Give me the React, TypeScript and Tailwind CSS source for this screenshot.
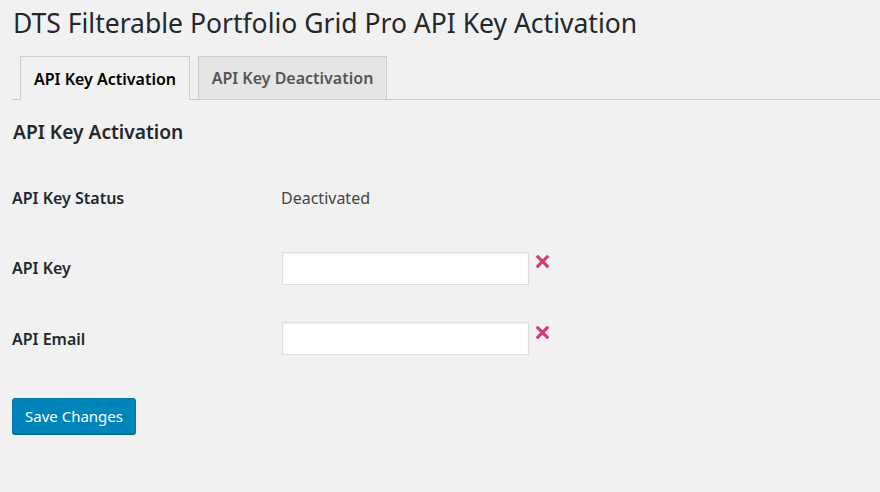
import React from "react";

function XIcon() {
  return (
    <svg width="13" height="13" viewBox="0 0 14 14" className="block">
      <path d="M2 2 L12 12 M12 2 L2 12" stroke="#d63b73" strokeWidth="3.4" strokeLinecap="square" fill="none" />
    </svg>
  );
}

export default function App() {
  return (
    <div className="w-[880px] h-[492px] overflow-hidden bg-[#f1f1f1] font-['Noto_Sans','Open_Sans',sans-serif] text-[#23282d]">
      <div className="pl-3">
        <h1 className="pt-[6px] pl-px text-[26.5px] leading-[35px] font-normal text-[#23282d]">
          DTS Filterable Portfolio Grid Pro API Key Activation
        </h1>
        <div className="mt-[15px] flex gap-2 pl-2 border-b border-[#cccccc]">
          <div className="-mb-px flex h-[44px] w-[170px] items-center justify-center border border-b-0 border-[#cccccc] bg-[#f1f1f1] text-[16px] font-semibold text-black">
            API Key Activation
          </div>
          <div className="flex h-[43px] w-[189px] items-center justify-center border border-b-0 border-[#cccccc] bg-[#e5e5e5] text-[16px] font-semibold text-[#555555]">
            API Key Deactivation
          </div>
        </div>
        <h2 className="mt-[19px] pl-px text-[19.2px] leading-[26px] font-semibold text-[#23282d]">
          API Key Activation
        </h2>
        <div className="mt-[18px] flex flex-col">
          <div className="flex h-[70px] items-center">
            <div className="w-[269px] text-[16px] font-semibold">API Key Status</div>
            <div className="text-[16px] text-[#444444]">Deactivated</div>
          </div>
          <div className="flex h-[70px] items-center">
            <div className="w-[270px] text-[16px] font-semibold">API Key</div>
            <input className="h-[33px] w-[247px] border border-[#dddddd] bg-white shadow-[inset_0_1px_2px_rgba(0,0,0,0.07)] outline-none" />
            <div className="ml-[7px] -mt-[13px]">
              <XIcon />
            </div>
          </div>
          <div className="flex h-[71px] items-center">
            <div className="w-[270px] text-[16px] font-semibold">API Email</div>
            <input className="h-[33px] w-[247px] border border-[#dddddd] bg-white shadow-[inset_0_1px_2px_rgba(0,0,0,0.07)] outline-none" />
            <div className="ml-[7px] -mt-[13px]">
              <XIcon />
            </div>
          </div>
        </div>
        <button className="mt-[24px] h-[36px] w-[124px] rounded-[3px] border border-[#0073aa] bg-[#0085ba] text-[15px] text-white shadow-[0_1px_0_#006799]">
          Save Changes
        </button>
      </div>
    </div>
  );
}
